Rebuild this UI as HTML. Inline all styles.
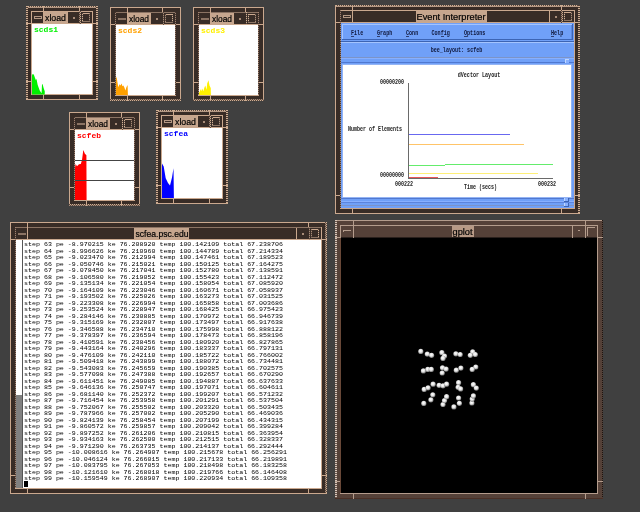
<!DOCTYPE html>
<html><head><meta charset="utf-8"><title>X11 desktop</title>
<style>
html,body{margin:0;padding:0;background:#404040;overflow:hidden}
svg{display:block;will-change:transform}
svg rect{shape-rendering:crispEdges}
text{white-space:pre}
</style></head><body>
<svg width="640" height="512" viewBox="0 0 640 512">
<defs>
<pattern id="hdg" width="2" height="2" patternUnits="userSpaceOnUse"><rect width="2" height="2" fill="#6a564c"/><rect width="2" height="1" fill="#d8c8bc"/></pattern>
<pattern id="hd" width="2" height="2" patternUnits="userSpaceOnUse"><rect width="2" height="2" fill="#4c3c34"/><rect width="2" height="1" fill="#d0b094"/></pattern>
<pattern id="vd" width="2" height="2" patternUnits="userSpaceOnUse"><rect width="2" height="2" fill="#5c4a40"/><rect width="1" height="2" fill="#d0b094"/></pattern>
<pattern id="stip" width="2" height="2" patternUnits="userSpaceOnUse"><rect width="2" height="2" fill="#5c4a40"/><rect width="1" height="1" fill="#d0b094"/><rect x="1" y="1" width="1" height="1" fill="#a88c78"/></pattern>
<pattern id="stip2" width="2" height="2" patternUnits="userSpaceOnUse"><rect width="2" height="2" fill="#4a3a32"/><rect width="1" height="1" fill="#a08270"/><rect x="1" y="1" width="1" height="1" fill="#a08270"/></pattern>
<pattern id="stipg" width="2" height="2" patternUnits="userSpaceOnUse"><rect width="2" height="2" fill="#8a7468"/><rect width="1" height="1" fill="#e0d0c4"/><rect x="1" y="1" width="1" height="1" fill="#e0d0c4"/></pattern>
<pattern id="stipd" width="2" height="2" patternUnits="userSpaceOnUse"><rect width="2" height="2" fill="#554138"/><rect width="1" height="1" fill="#1c1410"/><rect x="1" y="1" width="1" height="1" fill="#1c1410"/></pattern>
<radialGradient id="ball" cx="45%" cy="40%" r="60%"><stop offset="0" stop-color="#fff"/><stop offset="0.5" stop-color="#e4e4e4"/><stop offset="1" stop-color="#707070"/></radialGradient></defs>
<rect x="0" y="0" width="640" height="512" fill="#404040"/>
<rect x="26" y="6" width="72" height="94" fill="#382c26"/>
<rect x="26" y="6" width="72" height="1" fill="url(#vd)"/>
<rect x="26" y="7" width="72" height="1" fill="#b49884"/>
<rect x="26" y="6" width="2" height="94" fill="url(#hd)"/>
<rect x="96" y="6" width="2" height="94" fill="url(#hd)"/>
<rect x="26" y="99" width="72" height="1" fill="#caa88e"/>
<rect x="31" y="11" width="62" height="1" fill="#caa88e"/>
<rect x="31" y="11" width="1" height="84" fill="#caa88e"/>
<rect x="92" y="11" width="1" height="84" fill="#caa88e"/>
<rect x="31" y="94" width="62" height="1" fill="#caa88e"/>
<rect x="43" y="6" width="1" height="5" fill="#caa88e"/>
<rect x="43" y="95" width="1" height="5" fill="#caa88e"/>
<rect x="79" y="6" width="1" height="5" fill="#caa88e"/>
<rect x="79" y="95" width="1" height="5" fill="#caa88e"/>
<rect x="26" y="23" width="5" height="1" fill="#caa88e"/>
<rect x="93" y="23" width="5" height="1" fill="#caa88e"/>
<rect x="26" y="81" width="5" height="1" fill="#caa88e"/>
<rect x="93" y="81" width="5" height="1" fill="#caa88e"/>
<rect x="32" y="24" width="60" height="70" fill="#fff"/>
<rect x="32" y="23" width="60" height="1" fill="#caa88e"/>
<rect x="43" y="11" width="1" height="13" fill="#caa88e"/>
<rect x="67" y="12" width="1" height="12" fill="#caa88e"/>
<rect x="80" y="11" width="1" height="13" fill="url(#stip)"/>
<rect x="79" y="11" width="1" height="13" fill="url(#stip2)"/>
<rect x="34" y="16" width="8" height="3" fill="#b49884"/>
<rect x="35" y="17" width="6" height="1" fill="#382c26"/>
<rect x="73" y="17" width="2" height="2" fill="#a88c78"/>
<rect x="82" y="13" width="8" height="1" fill="#caa88e"/>
<rect x="82" y="13" width="1" height="9" fill="url(#stip)"/>
<rect x="89" y="13" width="1" height="9" fill="url(#stip)"/>
<rect x="82" y="21" width="8" height="1" fill="#8c7464"/>
<rect x="44" y="12" width="23" height="11" fill="#c6a68e"/>
<text x="55.5" y="20.5" font-family="Liberation Sans, sans-serif" font-size="9" fill="#000" text-anchor="middle" font-weight="normal" textLength="21" lengthAdjust="spacingAndGlyphs" stroke="#000" stroke-width="0.2">xload</text>
<text x="34" y="32" font-family="Liberation Mono, sans-serif" font-size="8" fill="#00f000" text-anchor="start" font-weight="bold">scds1</text>
<polygon points="32,94.5 32,75.6 32.6,74 33.8,74.5 35,78 35.8,80 36.5,79.1 37.7,85 39.7,90.5 41.6,93.2 42,84.2 42.6,84.2 43.6,88.1 44.75,91.25 44.75,94.5" fill="#00f000"/>
<rect x="110" y="7" width="71" height="94" fill="#382c26"/>
<rect x="110" y="7" width="71" height="1" fill="#caa88e"/>
<rect x="110" y="7" width="1" height="94" fill="#caa88e"/>
<rect x="180" y="7" width="1" height="94" fill="#caa88e"/>
<rect x="110" y="99" width="71" height="2" fill="url(#stip)"/>
<rect x="115" y="12" width="61" height="1" fill="#8c7464"/>
<rect x="115" y="12" width="1" height="84" fill="url(#stip2)"/>
<rect x="175" y="12" width="1" height="84" fill="url(#stip2)"/>
<rect x="115" y="95" width="61" height="1" fill="#caa88e"/>
<rect x="127" y="7" width="1" height="5" fill="#caa88e"/>
<rect x="127" y="96" width="1" height="5" fill="#caa88e"/>
<rect x="162" y="7" width="1" height="5" fill="#caa88e"/>
<rect x="162" y="96" width="1" height="5" fill="#caa88e"/>
<rect x="110" y="24" width="5" height="1" fill="#caa88e"/>
<rect x="176" y="24" width="5" height="1" fill="#caa88e"/>
<rect x="110" y="82" width="5" height="1" fill="#caa88e"/>
<rect x="176" y="82" width="5" height="1" fill="#caa88e"/>
<rect x="116" y="25" width="59" height="70" fill="#fff"/>
<rect x="116" y="24" width="59" height="1" fill="#caa88e"/>
<rect x="127" y="12" width="1" height="13" fill="#caa88e"/>
<rect x="150" y="13" width="1" height="12" fill="#caa88e"/>
<rect x="163" y="12" width="1" height="13" fill="url(#stip)"/>
<rect x="118" y="18" width="8" height="2" fill="#8c7464"/>
<rect x="156" y="18" width="2" height="2" fill="#a88c78"/>
<rect x="165" y="14" width="8" height="1" fill="#caa88e"/>
<rect x="165" y="14" width="1" height="9" fill="url(#stip)"/>
<rect x="172" y="14" width="1" height="9" fill="url(#stip)"/>
<rect x="165" y="22" width="8" height="1" fill="#8c7464"/>
<rect x="128" y="13" width="22" height="11" fill="#c6a68e"/>
<text x="139.0" y="21.5" font-family="Liberation Sans, sans-serif" font-size="9" fill="#000" text-anchor="middle" font-weight="normal" textLength="20" lengthAdjust="spacingAndGlyphs" stroke="#000" stroke-width="0.2">xload</text>
<text x="118" y="33" font-family="Liberation Mono, sans-serif" font-size="8" fill="#ffa000" text-anchor="start" font-weight="bold">scds2</text>
<polygon points="116,95 116,78.75 116.6,76.4 117.4,81.9 118.4,87.3 119.5,84.2 120.5,85.4 121.5,83.4 122.5,86.2 123.4,85.4 124.5,87.7 125.4,90.5 126.4,87.3 127.6,85 127.9,95" fill="#ffa000"/>
<rect x="193" y="7" width="71" height="94" fill="#382c26"/>
<rect x="193" y="7" width="71" height="1" fill="#caa88e"/>
<rect x="193" y="7" width="1" height="94" fill="#caa88e"/>
<rect x="263" y="7" width="1" height="94" fill="#caa88e"/>
<rect x="193" y="99" width="71" height="2" fill="url(#stip)"/>
<rect x="198" y="12" width="61" height="1" fill="#8c7464"/>
<rect x="198" y="12" width="1" height="84" fill="url(#stip2)"/>
<rect x="258" y="12" width="1" height="84" fill="url(#stip2)"/>
<rect x="198" y="95" width="61" height="1" fill="#caa88e"/>
<rect x="210" y="7" width="1" height="5" fill="#caa88e"/>
<rect x="210" y="96" width="1" height="5" fill="#caa88e"/>
<rect x="245" y="7" width="1" height="5" fill="#caa88e"/>
<rect x="245" y="96" width="1" height="5" fill="#caa88e"/>
<rect x="193" y="24" width="5" height="1" fill="#caa88e"/>
<rect x="259" y="24" width="5" height="1" fill="#caa88e"/>
<rect x="193" y="82" width="5" height="1" fill="#caa88e"/>
<rect x="259" y="82" width="5" height="1" fill="#caa88e"/>
<rect x="199" y="25" width="59" height="70" fill="#fff"/>
<rect x="199" y="24" width="59" height="1" fill="#caa88e"/>
<rect x="210" y="12" width="1" height="13" fill="#caa88e"/>
<rect x="233" y="13" width="1" height="12" fill="#caa88e"/>
<rect x="246" y="12" width="1" height="13" fill="url(#stip)"/>
<rect x="201" y="18" width="8" height="2" fill="#8c7464"/>
<rect x="239" y="18" width="2" height="2" fill="#a88c78"/>
<rect x="248" y="14" width="8" height="1" fill="#caa88e"/>
<rect x="248" y="14" width="1" height="9" fill="url(#stip)"/>
<rect x="255" y="14" width="1" height="9" fill="url(#stip)"/>
<rect x="248" y="22" width="8" height="1" fill="#8c7464"/>
<rect x="211" y="13" width="22" height="11" fill="#c6a68e"/>
<text x="222.0" y="21.5" font-family="Liberation Sans, sans-serif" font-size="9" fill="#000" text-anchor="middle" font-weight="normal" textLength="20" lengthAdjust="spacingAndGlyphs" stroke="#000" stroke-width="0.2">xload</text>
<text x="201" y="33" font-family="Liberation Mono, sans-serif" font-size="8" fill="#fff000" text-anchor="start" font-weight="bold">scds3</text>
<polygon points="199,95 199,91.2 199.8,92.8 200.2,88.9 201.2,91.25 202.2,88.5 203.3,91.25 204.5,87.3 205.3,85.4 206.5,89.7 207.2,83.4 208.4,80.3 209.6,85.8 210.75,88.1 210.9,95" fill="#fff000"/>
<rect x="69" y="112" width="71" height="94" fill="#382c26"/>
<rect x="69" y="112" width="71" height="1" fill="#caa88e"/>
<rect x="69" y="112" width="1" height="94" fill="#caa88e"/>
<rect x="139" y="112" width="1" height="94" fill="#caa88e"/>
<rect x="69" y="204" width="71" height="2" fill="url(#stip)"/>
<rect x="74" y="117" width="61" height="1" fill="#8c7464"/>
<rect x="74" y="117" width="1" height="84" fill="url(#stip2)"/>
<rect x="134" y="117" width="1" height="84" fill="url(#stip2)"/>
<rect x="74" y="200" width="61" height="1" fill="#caa88e"/>
<rect x="86" y="112" width="1" height="5" fill="#caa88e"/>
<rect x="86" y="201" width="1" height="5" fill="#caa88e"/>
<rect x="121" y="112" width="1" height="5" fill="#caa88e"/>
<rect x="121" y="201" width="1" height="5" fill="#caa88e"/>
<rect x="69" y="129" width="5" height="1" fill="#caa88e"/>
<rect x="135" y="129" width="5" height="1" fill="#caa88e"/>
<rect x="69" y="187" width="5" height="1" fill="#caa88e"/>
<rect x="135" y="187" width="5" height="1" fill="#caa88e"/>
<rect x="75" y="130" width="59" height="70" fill="#fff"/>
<rect x="75" y="129" width="59" height="1" fill="#caa88e"/>
<rect x="86" y="117" width="1" height="13" fill="#caa88e"/>
<rect x="109" y="118" width="1" height="12" fill="#caa88e"/>
<rect x="122" y="117" width="1" height="13" fill="url(#stip)"/>
<rect x="77" y="123" width="8" height="2" fill="#8c7464"/>
<rect x="115" y="123" width="2" height="2" fill="#a88c78"/>
<rect x="124" y="119" width="8" height="1" fill="#caa88e"/>
<rect x="124" y="119" width="1" height="9" fill="url(#stip)"/>
<rect x="131" y="119" width="1" height="9" fill="url(#stip)"/>
<rect x="124" y="127" width="8" height="1" fill="#8c7464"/>
<rect x="87" y="118" width="22" height="11" fill="#c6a68e"/>
<text x="98.0" y="126.5" font-family="Liberation Sans, sans-serif" font-size="9" fill="#000" text-anchor="middle" font-weight="normal" textLength="20" lengthAdjust="spacingAndGlyphs" stroke="#000" stroke-width="0.2">xload</text>
<text x="77" y="138" font-family="Liberation Mono, sans-serif" font-size="8" fill="#ff0000" text-anchor="start" font-weight="bold">scfeb</text>
<polygon points="75,200 75,167.8 75.6,164 77,166.3 79,164.3 80.8,164 82,160 83.3,150 84.9,153.8 86.4,155.3 86.6,200" fill="#ff0000"/>
<rect x="75" y="160" width="59" height="1" fill="#444"/>
<rect x="75" y="180" width="59" height="1" fill="#444"/>
<rect x="156" y="110" width="72" height="94" fill="#382c26"/>
<rect x="156" y="110" width="72" height="1" fill="url(#vd)"/>
<rect x="156" y="111" width="72" height="1" fill="#b49884"/>
<rect x="156" y="110" width="2" height="94" fill="url(#hd)"/>
<rect x="226" y="110" width="2" height="94" fill="url(#hd)"/>
<rect x="156" y="203" width="72" height="1" fill="#caa88e"/>
<rect x="161" y="115" width="62" height="1" fill="#caa88e"/>
<rect x="161" y="115" width="1" height="84" fill="#caa88e"/>
<rect x="222" y="115" width="1" height="84" fill="#caa88e"/>
<rect x="161" y="198" width="62" height="1" fill="#caa88e"/>
<rect x="173" y="110" width="1" height="5" fill="#caa88e"/>
<rect x="173" y="199" width="1" height="5" fill="#caa88e"/>
<rect x="209" y="110" width="1" height="5" fill="#caa88e"/>
<rect x="209" y="199" width="1" height="5" fill="#caa88e"/>
<rect x="156" y="127" width="5" height="1" fill="#caa88e"/>
<rect x="223" y="127" width="5" height="1" fill="#caa88e"/>
<rect x="156" y="185" width="5" height="1" fill="#caa88e"/>
<rect x="223" y="185" width="5" height="1" fill="#caa88e"/>
<rect x="162" y="128" width="60" height="70" fill="#fff"/>
<rect x="162" y="127" width="60" height="1" fill="#caa88e"/>
<rect x="173" y="115" width="1" height="13" fill="#caa88e"/>
<rect x="197" y="116" width="1" height="12" fill="#caa88e"/>
<rect x="210" y="115" width="1" height="13" fill="url(#stip)"/>
<rect x="209" y="115" width="1" height="13" fill="url(#stip2)"/>
<rect x="164" y="120" width="8" height="3" fill="#b49884"/>
<rect x="165" y="121" width="6" height="1" fill="#382c26"/>
<rect x="203" y="121" width="2" height="2" fill="#a88c78"/>
<rect x="212" y="117" width="8" height="1" fill="#caa88e"/>
<rect x="212" y="117" width="1" height="9" fill="url(#stip)"/>
<rect x="219" y="117" width="1" height="9" fill="url(#stip)"/>
<rect x="212" y="125" width="8" height="1" fill="#8c7464"/>
<rect x="174" y="116" width="23" height="11" fill="#c6a68e"/>
<text x="185.5" y="124.5" font-family="Liberation Sans, sans-serif" font-size="9" fill="#000" text-anchor="middle" font-weight="normal" textLength="21" lengthAdjust="spacingAndGlyphs" stroke="#000" stroke-width="0.2">xload</text>
<text x="164" y="136" font-family="Liberation Mono, sans-serif" font-size="8" fill="#0000ff" text-anchor="start" font-weight="bold">scfea</text>
<polygon points="162,198 162,163.5 163.7,166.6 165.7,178.3 168,183 170,185.4 172,177.6 173.5,168.2 173.9,198" fill="#0000ff"/>
<rect x="335" y="5" width="245" height="209" fill="#382c26"/>
<rect x="335" y="5" width="245" height="1" fill="url(#vd)"/>
<rect x="335" y="6" width="245" height="1" fill="#b49884"/>
<rect x="335" y="5" width="1" height="209" fill="#caa88e"/>
<rect x="578" y="5" width="2" height="209" fill="url(#hd)"/>
<rect x="335" y="213" width="245" height="1" fill="#caa88e"/>
<rect x="340" y="10" width="235" height="1" fill="#caa88e"/>
<rect x="340" y="10" width="1" height="199" fill="url(#stip2)"/>
<rect x="574" y="10" width="1" height="199" fill="#caa88e"/>
<rect x="340" y="208" width="235" height="1" fill="#caa88e"/>
<rect x="352" y="5" width="1" height="5" fill="#caa88e"/>
<rect x="352" y="209" width="1" height="5" fill="#caa88e"/>
<rect x="561" y="5" width="1" height="5" fill="#caa88e"/>
<rect x="561" y="209" width="1" height="5" fill="#caa88e"/>
<rect x="335" y="22" width="5" height="1" fill="#caa88e"/>
<rect x="575" y="22" width="5" height="1" fill="#caa88e"/>
<rect x="335" y="195" width="5" height="1" fill="#caa88e"/>
<rect x="575" y="195" width="5" height="1" fill="#caa88e"/>
<rect x="341" y="23" width="233" height="185" fill="#70a0f8"/>
<rect x="341" y="22" width="233" height="1" fill="#caa88e"/>
<rect x="352" y="10" width="1" height="13" fill="#caa88e"/>
<rect x="549" y="11" width="1" height="12" fill="#caa88e"/>
<rect x="562" y="10" width="1" height="13" fill="url(#stip)"/>
<rect x="561" y="10" width="1" height="13" fill="url(#stip2)"/>
<rect x="343" y="15" width="8" height="3" fill="#b49884"/>
<rect x="344" y="16" width="6" height="1" fill="#382c26"/>
<rect x="555" y="16" width="2" height="2" fill="#a88c78"/>
<rect x="564" y="12" width="8" height="1" fill="#caa88e"/>
<rect x="564" y="12" width="1" height="9" fill="url(#stip)"/>
<rect x="571" y="12" width="1" height="9" fill="url(#stip)"/>
<rect x="564" y="20" width="8" height="1" fill="#8c7464"/>
<rect x="416" y="11" width="71" height="11" fill="#c6a68e"/>
<text x="451.0" y="19.5" font-family="Liberation Sans, sans-serif" font-size="9" fill="#000" text-anchor="middle" font-weight="normal" textLength="69" lengthAdjust="spacingAndGlyphs" stroke="#000" stroke-width="0.2">Event Interpreter</text>
<rect x="342" y="24" width="231" height="16" fill="#70a0f8"/>
<rect x="342" y="24" width="231" height="1" fill="#a4c4ff"/>
<rect x="342" y="24" width="1" height="16" fill="#a4c4ff"/>
<rect x="342" y="39" width="231" height="1" fill="#3c64b4"/>
<rect x="572" y="24" width="1" height="16" fill="#3c64b4"/>
<rect x="571" y="25" width="1" height="14" fill="#5c88e0"/>
<text x="351" y="35" font-family="Liberation Mono, sans-serif" font-size="6.5" fill="#10183c" text-anchor="start" font-weight="bold" textLength="12.2" lengthAdjust="spacingAndGlyphs">File</text>
<rect x="351" y="36" width="3" height="0.5" fill="#304070"/>
<text x="377" y="35" font-family="Liberation Mono, sans-serif" font-size="6.5" fill="#10183c" text-anchor="start" font-weight="bold" textLength="15.25" lengthAdjust="spacingAndGlyphs">Graph</text>
<rect x="377" y="36" width="3" height="0.5" fill="#304070"/>
<text x="406" y="35" font-family="Liberation Mono, sans-serif" font-size="6.5" fill="#10183c" text-anchor="start" font-weight="bold" textLength="12.2" lengthAdjust="spacingAndGlyphs">Conn</text>
<rect x="406" y="36" width="3" height="0.5" fill="#304070"/>
<text x="431.5" y="35" font-family="Liberation Mono, sans-serif" font-size="6.5" fill="#10183c" text-anchor="start" font-weight="bold" textLength="18.299999999999997" lengthAdjust="spacingAndGlyphs">Config</text>
<rect x="440.5" y="36" width="3" height="0.5" fill="#304070"/>
<text x="464" y="35" font-family="Liberation Mono, sans-serif" font-size="6.5" fill="#10183c" text-anchor="start" font-weight="bold" textLength="21.349999999999998" lengthAdjust="spacingAndGlyphs">Options</text>
<rect x="464" y="36" width="3" height="0.5" fill="#304070"/>
<text x="551" y="35" font-family="Liberation Mono, sans-serif" font-size="6.5" fill="#10183c" text-anchor="start" font-weight="bold" textLength="12.2" lengthAdjust="spacingAndGlyphs">Help</text>
<rect x="551" y="36" width="3" height="0.5" fill="#304070"/>
<rect x="341" y="41" width="233" height="1" fill="#3c64b4"/>
<rect x="341" y="42" width="233" height="1" fill="#a4c4ff"/>
<text x="456.5" y="52" font-family="Liberation Mono, sans-serif" font-size="6.5" fill="#10183c" text-anchor="middle" font-weight="bold" textLength="51.5" lengthAdjust="spacingAndGlyphs">bee_layout: scfeb</text>
<rect x="341" y="57" width="233" height="1" fill="#7c94c8"/>
<rect x="341" y="58" width="233" height="1" fill="#88b0ff"/>
<rect x="341" y="62" width="233" height="1" fill="#5078d0"/>
<rect x="342" y="64" width="230" height="134" fill="#94b4f4"/>
<rect x="343" y="65" width="228" height="132" fill="#fff"/>
<rect x="565" y="59" width="4" height="4" fill="#88b0ff"/>
<rect x="565" y="59" width="4" height="1" fill="#c0d8ff"/>
<rect x="565" y="59" width="1" height="4" fill="#c0d8ff"/>
<text x="479" y="76.5" font-family="Liberation Mono, sans-serif" font-size="6.5" fill="#222" text-anchor="middle" font-weight="bold" textLength="42.5" lengthAdjust="spacingAndGlyphs">dVector Layout</text>
<text x="380" y="83.5" font-family="Liberation Mono, sans-serif" font-size="6.5" fill="#222" text-anchor="start" font-weight="bold" textLength="24" lengthAdjust="spacingAndGlyphs">00000200</text>
<text x="348" y="130.7" font-family="Liberation Mono, sans-serif" font-size="6.5" fill="#222" text-anchor="start" font-weight="bold" textLength="54" lengthAdjust="spacingAndGlyphs">Number of Elements</text>
<text x="380" y="177.3" font-family="Liberation Mono, sans-serif" font-size="6.5" fill="#222" text-anchor="start" font-weight="bold" textLength="24" lengthAdjust="spacingAndGlyphs">00000000</text>
<text x="395" y="185.5" font-family="Liberation Mono, sans-serif" font-size="6.5" fill="#222" text-anchor="start" font-weight="bold" textLength="18" lengthAdjust="spacingAndGlyphs">000222</text>
<text x="538" y="185.5" font-family="Liberation Mono, sans-serif" font-size="6.5" fill="#222" text-anchor="start" font-weight="bold" textLength="18" lengthAdjust="spacingAndGlyphs">000232</text>
<text x="464" y="189" font-family="Liberation Mono, sans-serif" font-size="6.5" fill="#222" text-anchor="start" font-weight="bold" textLength="33" lengthAdjust="spacingAndGlyphs">Time (secs)</text>
<rect x="408" y="83" width="1" height="95.5" fill="#6a6a6a"/>
<rect x="408" y="178" width="145" height="1" fill="#6a6a6a"/>
<rect x="409" y="134" width="101" height="1" fill="#6868f0"/>
<rect x="409" y="144" width="115" height="1" fill="#ffc468"/>
<rect x="409" y="165" width="36" height="1" fill="#64ec6c"/>
<rect x="445" y="164" width="108" height="1" fill="#64ec6c"/>
<rect x="409" y="173" width="129" height="1" fill="#fff078"/>
<rect x="409" y="177" width="29" height="1.2" fill="#e85858"/>
<rect x="341" y="198" width="233" height="1" fill="#5078d0"/>
<rect x="341" y="201" width="233" height="1" fill="#88b0ff"/>
<rect x="341" y="202" width="233" height="1" fill="#5c84dc"/>
<rect x="341" y="205" width="233" height="1" fill="#7c94c8"/>
<rect x="564" y="198" width="4" height="4" fill="#88b0ff"/>
<rect x="564" y="198" width="1" height="4" fill="#c0d8ff"/>
<rect x="564" y="201" width="4" height="1" fill="#3c64b4"/>
<rect x="568" y="198" width="1" height="4" fill="#3c64b4"/>
<rect x="564" y="203" width="4" height="4" fill="#88b0ff"/>
<rect x="564" y="203" width="1" height="4" fill="#c0d8ff"/>
<rect x="564" y="206" width="4" height="1" fill="#3c64b4"/>
<rect x="568" y="203" width="1" height="4" fill="#3c64b4"/>
<rect x="10" y="222" width="317" height="272" fill="#382c26"/>
<rect x="10" y="222" width="317" height="1" fill="#caa88e"/>
<rect x="10" y="222" width="1" height="272" fill="#caa88e"/>
<rect x="325" y="222" width="2" height="272" fill="url(#stip)"/>
<rect x="10" y="493" width="317" height="1" fill="#caa88e"/>
<rect x="15" y="227" width="307" height="1" fill="#8c7464"/>
<rect x="15" y="227" width="1" height="262" fill="url(#stip2)"/>
<rect x="321" y="227" width="1" height="262" fill="#caa88e"/>
<rect x="15" y="488" width="307" height="1" fill="#caa88e"/>
<rect x="27" y="222" width="1" height="5" fill="#caa88e"/>
<rect x="27" y="489" width="1" height="5" fill="#caa88e"/>
<rect x="308" y="222" width="1" height="5" fill="#caa88e"/>
<rect x="308" y="489" width="1" height="5" fill="#caa88e"/>
<rect x="10" y="239" width="5" height="1" fill="#caa88e"/>
<rect x="322" y="239" width="5" height="1" fill="#caa88e"/>
<rect x="10" y="475" width="5" height="1" fill="#caa88e"/>
<rect x="322" y="475" width="5" height="1" fill="#caa88e"/>
<rect x="16" y="240" width="305" height="248" fill="#fff"/>
<rect x="16" y="239" width="305" height="1" fill="#caa88e"/>
<rect x="27" y="227" width="1" height="13" fill="#caa88e"/>
<rect x="296" y="228" width="1" height="12" fill="#caa88e"/>
<rect x="309" y="227" width="1" height="13" fill="url(#stip)"/>
<rect x="18" y="233" width="8" height="2" fill="#8c7464"/>
<rect x="302" y="233" width="2" height="2" fill="#a88c78"/>
<rect x="311" y="229" width="8" height="1" fill="#caa88e"/>
<rect x="311" y="229" width="1" height="9" fill="url(#stip)"/>
<rect x="318" y="229" width="1" height="9" fill="url(#stip)"/>
<rect x="311" y="237" width="8" height="1" fill="#8c7464"/>
<rect x="134" y="228" width="55" height="11" fill="#c6a68e"/>
<text x="162.0" y="236.5" font-family="Liberation Sans, sans-serif" font-size="9" fill="#000" text-anchor="middle" font-weight="normal" textLength="53" lengthAdjust="spacingAndGlyphs" stroke="#000" stroke-width="0.2">scfea.psc.edu</text>
<rect x="16" y="395" width="6" height="93" fill="#808080"/>
<rect x="22" y="240" width="1" height="248" fill="#555"/>
<text x="24" y="246.0" font-family="Liberation Mono, sans-serif" font-size="5.9" fill="#000" text-anchor="start" font-weight="normal" textLength="259.0" lengthAdjust="spacingAndGlyphs">step 63 pe -8.970215 ke 76.208920 temp 100.142109 total 67.238706</text>
<text x="24" y="252.5" font-family="Liberation Mono, sans-serif" font-size="5.9" fill="#000" text-anchor="start" font-weight="normal" textLength="259.0" lengthAdjust="spacingAndGlyphs">step 64 pe -8.996626 ke 76.210960 temp 100.144789 total 67.214334</text>
<text x="24" y="259.0" font-family="Liberation Mono, sans-serif" font-size="5.9" fill="#000" text-anchor="start" font-weight="normal" textLength="259.0" lengthAdjust="spacingAndGlyphs">step 65 pe -9.023470 ke 76.212994 temp 100.147461 total 67.189523</text>
<text x="24" y="265.5" font-family="Liberation Mono, sans-serif" font-size="5.9" fill="#000" text-anchor="start" font-weight="normal" textLength="259.0" lengthAdjust="spacingAndGlyphs">step 66 pe -9.050746 ke 76.215021 temp 100.150125 total 67.164275</text>
<text x="24" y="272.0" font-family="Liberation Mono, sans-serif" font-size="5.9" fill="#000" text-anchor="start" font-weight="normal" textLength="259.0" lengthAdjust="spacingAndGlyphs">step 67 pe -9.078450 ke 76.217041 temp 100.152780 total 67.138591</text>
<text x="24" y="278.5" font-family="Liberation Mono, sans-serif" font-size="5.9" fill="#000" text-anchor="start" font-weight="normal" textLength="259.0" lengthAdjust="spacingAndGlyphs">step 68 pe -9.106580 ke 76.219052 temp 100.155423 total 67.112472</text>
<text x="24" y="285.0" font-family="Liberation Mono, sans-serif" font-size="5.9" fill="#000" text-anchor="start" font-weight="normal" textLength="259.0" lengthAdjust="spacingAndGlyphs">step 69 pe -9.135134 ke 76.221054 temp 100.158054 total 67.085920</text>
<text x="24" y="291.5" font-family="Liberation Mono, sans-serif" font-size="5.9" fill="#000" text-anchor="start" font-weight="normal" textLength="259.0" lengthAdjust="spacingAndGlyphs">step 70 pe -9.164109 ke 76.223046 temp 100.160671 total 67.058937</text>
<text x="24" y="298.0" font-family="Liberation Mono, sans-serif" font-size="5.9" fill="#000" text-anchor="start" font-weight="normal" textLength="259.0" lengthAdjust="spacingAndGlyphs">step 71 pe -9.193502 ke 76.225026 temp 100.163273 total 67.031525</text>
<text x="24" y="304.5" font-family="Liberation Mono, sans-serif" font-size="5.9" fill="#000" text-anchor="start" font-weight="normal" textLength="259.0" lengthAdjust="spacingAndGlyphs">step 72 pe -9.223308 ke 76.226994 temp 100.165858 total 67.003686</text>
<text x="24" y="311.0" font-family="Liberation Mono, sans-serif" font-size="5.9" fill="#000" text-anchor="start" font-weight="normal" textLength="259.0" lengthAdjust="spacingAndGlyphs">step 73 pe -9.253524 ke 76.228947 temp 100.168425 total 66.975423</text>
<text x="24" y="317.5" font-family="Liberation Mono, sans-serif" font-size="5.9" fill="#000" text-anchor="start" font-weight="normal" textLength="259.0" lengthAdjust="spacingAndGlyphs">step 74 pe -9.284146 ke 76.230885 temp 100.170972 total 66.946739</text>
<text x="24" y="324.0" font-family="Liberation Mono, sans-serif" font-size="5.9" fill="#000" text-anchor="start" font-weight="normal" textLength="259.0" lengthAdjust="spacingAndGlyphs">step 75 pe -9.315169 ke 76.232807 temp 100.173497 total 66.917638</text>
<text x="24" y="330.5" font-family="Liberation Mono, sans-serif" font-size="5.9" fill="#000" text-anchor="start" font-weight="normal" textLength="259.0" lengthAdjust="spacingAndGlyphs">step 76 pe -9.346588 ke 76.234710 temp 100.175998 total 66.888122</text>
<text x="24" y="337.0" font-family="Liberation Mono, sans-serif" font-size="5.9" fill="#000" text-anchor="start" font-weight="normal" textLength="259.0" lengthAdjust="spacingAndGlyphs">step 77 pe -9.378397 ke 76.236594 temp 100.178473 total 66.858196</text>
<text x="24" y="343.5" font-family="Liberation Mono, sans-serif" font-size="5.9" fill="#000" text-anchor="start" font-weight="normal" textLength="259.0" lengthAdjust="spacingAndGlyphs">step 78 pe -9.410591 ke 76.238456 temp 100.180920 total 66.827865</text>
<text x="24" y="350.0" font-family="Liberation Mono, sans-serif" font-size="5.9" fill="#000" text-anchor="start" font-weight="normal" textLength="259.0" lengthAdjust="spacingAndGlyphs">step 79 pe -9.443164 ke 76.240296 temp 100.183337 total 66.797131</text>
<text x="24" y="356.5" font-family="Liberation Mono, sans-serif" font-size="5.9" fill="#000" text-anchor="start" font-weight="normal" textLength="259.0" lengthAdjust="spacingAndGlyphs">step 80 pe -9.476109 ke 76.242110 temp 100.185722 total 66.766002</text>
<text x="24" y="363.0" font-family="Liberation Mono, sans-serif" font-size="5.9" fill="#000" text-anchor="start" font-weight="normal" textLength="259.0" lengthAdjust="spacingAndGlyphs">step 81 pe -9.509418 ke 76.243899 temp 100.188072 total 66.734481</text>
<text x="24" y="369.5" font-family="Liberation Mono, sans-serif" font-size="5.9" fill="#000" text-anchor="start" font-weight="normal" textLength="259.0" lengthAdjust="spacingAndGlyphs">step 82 pe -9.543083 ke 76.245659 temp 100.190385 total 66.702575</text>
<text x="24" y="376.0" font-family="Liberation Mono, sans-serif" font-size="5.9" fill="#000" text-anchor="start" font-weight="normal" textLength="259.0" lengthAdjust="spacingAndGlyphs">step 83 pe -9.577098 ke 76.247388 temp 100.192657 total 66.670290</text>
<text x="24" y="382.5" font-family="Liberation Mono, sans-serif" font-size="5.9" fill="#000" text-anchor="start" font-weight="normal" textLength="259.0" lengthAdjust="spacingAndGlyphs">step 84 pe -9.611451 ke 76.249085 temp 100.194887 total 66.637633</text>
<text x="24" y="389.0" font-family="Liberation Mono, sans-serif" font-size="5.9" fill="#000" text-anchor="start" font-weight="normal" textLength="259.0" lengthAdjust="spacingAndGlyphs">step 85 pe -9.646136 ke 76.250747 temp 100.197071 total 66.604611</text>
<text x="24" y="395.5" font-family="Liberation Mono, sans-serif" font-size="5.9" fill="#000" text-anchor="start" font-weight="normal" textLength="259.0" lengthAdjust="spacingAndGlyphs">step 86 pe -9.681140 ke 76.252372 temp 100.199207 total 66.571232</text>
<text x="24" y="402.0" font-family="Liberation Mono, sans-serif" font-size="5.9" fill="#000" text-anchor="start" font-weight="normal" textLength="259.0" lengthAdjust="spacingAndGlyphs">step 87 pe -9.716454 ke 76.253958 temp 100.201291 total 66.537504</text>
<text x="24" y="408.5" font-family="Liberation Mono, sans-serif" font-size="5.9" fill="#000" text-anchor="start" font-weight="normal" textLength="259.0" lengthAdjust="spacingAndGlyphs">step 88 pe -9.752067 ke 76.255502 temp 100.203320 total 66.503435</text>
<text x="24" y="415.0" font-family="Liberation Mono, sans-serif" font-size="5.9" fill="#000" text-anchor="start" font-weight="normal" textLength="259.0" lengthAdjust="spacingAndGlyphs">step 89 pe -9.787966 ke 76.257002 temp 100.205290 total 66.469036</text>
<text x="24" y="421.5" font-family="Liberation Mono, sans-serif" font-size="5.9" fill="#000" text-anchor="start" font-weight="normal" textLength="259.0" lengthAdjust="spacingAndGlyphs">step 90 pe -9.824139 ke 76.258454 temp 100.207199 total 66.434315</text>
<text x="24" y="428.0" font-family="Liberation Mono, sans-serif" font-size="5.9" fill="#000" text-anchor="start" font-weight="normal" textLength="259.0" lengthAdjust="spacingAndGlyphs">step 91 pe -9.860572 ke 76.259857 temp 100.209042 total 66.399284</text>
<text x="24" y="434.5" font-family="Liberation Mono, sans-serif" font-size="5.9" fill="#000" text-anchor="start" font-weight="normal" textLength="259.0" lengthAdjust="spacingAndGlyphs">step 92 pe -9.897252 ke 76.261206 temp 100.210815 total 66.363954</text>
<text x="24" y="441.0" font-family="Liberation Mono, sans-serif" font-size="5.9" fill="#000" text-anchor="start" font-weight="normal" textLength="259.0" lengthAdjust="spacingAndGlyphs">step 93 pe -9.934163 ke 76.262500 temp 100.212515 total 66.328337</text>
<text x="24" y="447.5" font-family="Liberation Mono, sans-serif" font-size="5.9" fill="#000" text-anchor="start" font-weight="normal" textLength="259.0" lengthAdjust="spacingAndGlyphs">step 94 pe -9.971290 ke 76.263735 temp 100.214137 total 66.292444</text>
<text x="24" y="454.0" font-family="Liberation Mono, sans-serif" font-size="5.9" fill="#000" text-anchor="start" font-weight="normal" textLength="263.0" lengthAdjust="spacingAndGlyphs">step 95 pe -10.008616 ke 76.264907 temp 100.215678 total 66.256291</text>
<text x="24" y="460.5" font-family="Liberation Mono, sans-serif" font-size="5.9" fill="#000" text-anchor="start" font-weight="normal" textLength="263.0" lengthAdjust="spacingAndGlyphs">step 96 pe -10.046124 ke 76.266015 temp 100.217133 total 66.219891</text>
<text x="24" y="467.0" font-family="Liberation Mono, sans-serif" font-size="5.9" fill="#000" text-anchor="start" font-weight="normal" textLength="263.0" lengthAdjust="spacingAndGlyphs">step 97 pe -10.083795 ke 76.267053 temp 100.218498 total 66.183258</text>
<text x="24" y="473.5" font-family="Liberation Mono, sans-serif" font-size="5.9" fill="#000" text-anchor="start" font-weight="normal" textLength="263.0" lengthAdjust="spacingAndGlyphs">step 98 pe -10.121610 ke 76.268018 temp 100.219766 total 66.146408</text>
<text x="24" y="480.0" font-family="Liberation Mono, sans-serif" font-size="5.9" fill="#000" text-anchor="start" font-weight="normal" textLength="263.0" lengthAdjust="spacingAndGlyphs">step 99 pe -10.159549 ke 76.268907 temp 100.220934 total 66.109358</text>
<rect x="24" y="481" width="4" height="6" fill="#000"/>
<rect x="335" y="220" width="268" height="279" fill="#554138"/>
<rect x="335" y="220" width="268" height="1" fill="#b49c8c"/>
<rect x="335" y="220" width="2" height="279" fill="url(#hdg)"/>
<rect x="602" y="220" width="1" height="279" fill="url(#stipd)"/>
<rect x="335" y="498" width="268" height="1" fill="#4a3026"/>
<rect x="340" y="225" width="258" height="1" fill="#b49c8c"/>
<rect x="340" y="225" width="1" height="269" fill="#b49c8c"/>
<rect x="597" y="225" width="1" height="269" fill="#b49c8c"/>
<rect x="340" y="493" width="258" height="1" fill="#b49c8c"/>
<rect x="353" y="220" width="1" height="5" fill="#b49c8c"/>
<rect x="353" y="494" width="1" height="5" fill="#b49c8c"/>
<rect x="585" y="220" width="1" height="5" fill="#b49c8c"/>
<rect x="585" y="494" width="1" height="5" fill="#b49c8c"/>
<rect x="335" y="237" width="5" height="1" fill="#b49c8c"/>
<rect x="598" y="237" width="5" height="1" fill="#b49c8c"/>
<rect x="335" y="481" width="5" height="1" fill="#b49c8c"/>
<rect x="598" y="481" width="5" height="1" fill="#b49c8c"/>
<rect x="340" y="238" width="1" height="255" fill="#694838"/>
<rect x="341" y="238" width="256" height="255" fill="#000"/>
<rect x="341" y="237" width="256" height="1" fill="#2a201c"/>
<rect x="353" y="225" width="1" height="13" fill="#b49c8c"/>
<rect x="572" y="226" width="1" height="12" fill="#b49c8c"/>
<rect x="585" y="225" width="1" height="13" fill="#b49c8c"/>
<rect x="343" y="230" width="8" height="1" fill="#b49c8c"/>
<rect x="343" y="230" width="1" height="2" fill="#b49c8c"/>
<rect x="578" y="230" width="2" height="1" fill="#b49c8c"/>
<rect x="587" y="227" width="8" height="1" fill="#b49c8c"/>
<rect x="587" y="227" width="1" height="9" fill="#b49c8c"/>
<rect x="452" y="226" width="22" height="11" fill="#b89a86"/>
<text x="462.5" y="234.5" font-family="Liberation Sans, sans-serif" font-size="9" fill="#000" text-anchor="middle" font-weight="normal" textLength="20" lengthAdjust="spacingAndGlyphs" stroke="#000" stroke-width="0.2">gplot</text>
<circle cx="420.8" cy="351.4" r="2.6" fill="url(#ball)"/>
<circle cx="427.3" cy="354.1" r="2.6" fill="url(#ball)"/>
<circle cx="431.6" cy="355.3" r="2.6" fill="url(#ball)"/>
<circle cx="441.9" cy="352.7" r="2.6" fill="url(#ball)"/>
<circle cx="444.5" cy="356.1" r="2.6" fill="url(#ball)"/>
<circle cx="443" cy="358.4" r="2.6" fill="url(#ball)"/>
<circle cx="455.9" cy="353.8" r="2.6" fill="url(#ball)"/>
<circle cx="460.2" cy="354.5" r="2.6" fill="url(#ball)"/>
<circle cx="472.7" cy="351.9" r="2.6" fill="url(#ball)"/>
<circle cx="475.3" cy="354.5" r="2.6" fill="url(#ball)"/>
<circle cx="470.3" cy="355.3" r="2.6" fill="url(#ball)"/>
<circle cx="423.4" cy="370.9" r="2.6" fill="url(#ball)"/>
<circle cx="427.8" cy="369.4" r="2.6" fill="url(#ball)"/>
<circle cx="431.3" cy="369.4" r="2.6" fill="url(#ball)"/>
<circle cx="442.5" cy="367.8" r="2.6" fill="url(#ball)"/>
<circle cx="446.1" cy="369.1" r="2.6" fill="url(#ball)"/>
<circle cx="442.2" cy="373" r="2.6" fill="url(#ball)"/>
<circle cx="456.3" cy="370.2" r="2.6" fill="url(#ball)"/>
<circle cx="460.9" cy="368.1" r="2.6" fill="url(#ball)"/>
<circle cx="475.8" cy="367" r="2.6" fill="url(#ball)"/>
<circle cx="472.2" cy="369.4" r="2.6" fill="url(#ball)"/>
<circle cx="424.2" cy="389.4" r="2.6" fill="url(#ball)"/>
<circle cx="428.1" cy="387.8" r="2.6" fill="url(#ball)"/>
<circle cx="433.1" cy="384.2" r="2.6" fill="url(#ball)"/>
<circle cx="439.1" cy="385.3" r="2.6" fill="url(#ball)"/>
<circle cx="443" cy="385.8" r="2.6" fill="url(#ball)"/>
<circle cx="446.6" cy="384.2" r="2.6" fill="url(#ball)"/>
<circle cx="458.6" cy="382.7" r="2.6" fill="url(#ball)"/>
<circle cx="458.1" cy="387.3" r="2.6" fill="url(#ball)"/>
<circle cx="460.6" cy="388.9" r="2.6" fill="url(#ball)"/>
<circle cx="473.4" cy="384.7" r="2.6" fill="url(#ball)"/>
<circle cx="476.3" cy="388.1" r="2.6" fill="url(#ball)"/>
<circle cx="423.8" cy="403.4" r="2.6" fill="url(#ball)"/>
<circle cx="430.9" cy="399.8" r="2.6" fill="url(#ball)"/>
<circle cx="432.8" cy="394.8" r="2.6" fill="url(#ball)"/>
<circle cx="443" cy="404.5" r="2.6" fill="url(#ball)"/>
<circle cx="444.5" cy="400.6" r="2.6" fill="url(#ball)"/>
<circle cx="446.6" cy="396.7" r="2.6" fill="url(#ball)"/>
<circle cx="453.9" cy="406.9" r="2.6" fill="url(#ball)"/>
<circle cx="459.4" cy="403.3" r="2.6" fill="url(#ball)"/>
<circle cx="458.6" cy="398" r="2.6" fill="url(#ball)"/>
<circle cx="471.9" cy="403" r="2.6" fill="url(#ball)"/>
<circle cx="472.2" cy="399.1" r="2.6" fill="url(#ball)"/>
<circle cx="473.4" cy="395.9" r="2.6" fill="url(#ball)"/>
</svg>
</body></html>
